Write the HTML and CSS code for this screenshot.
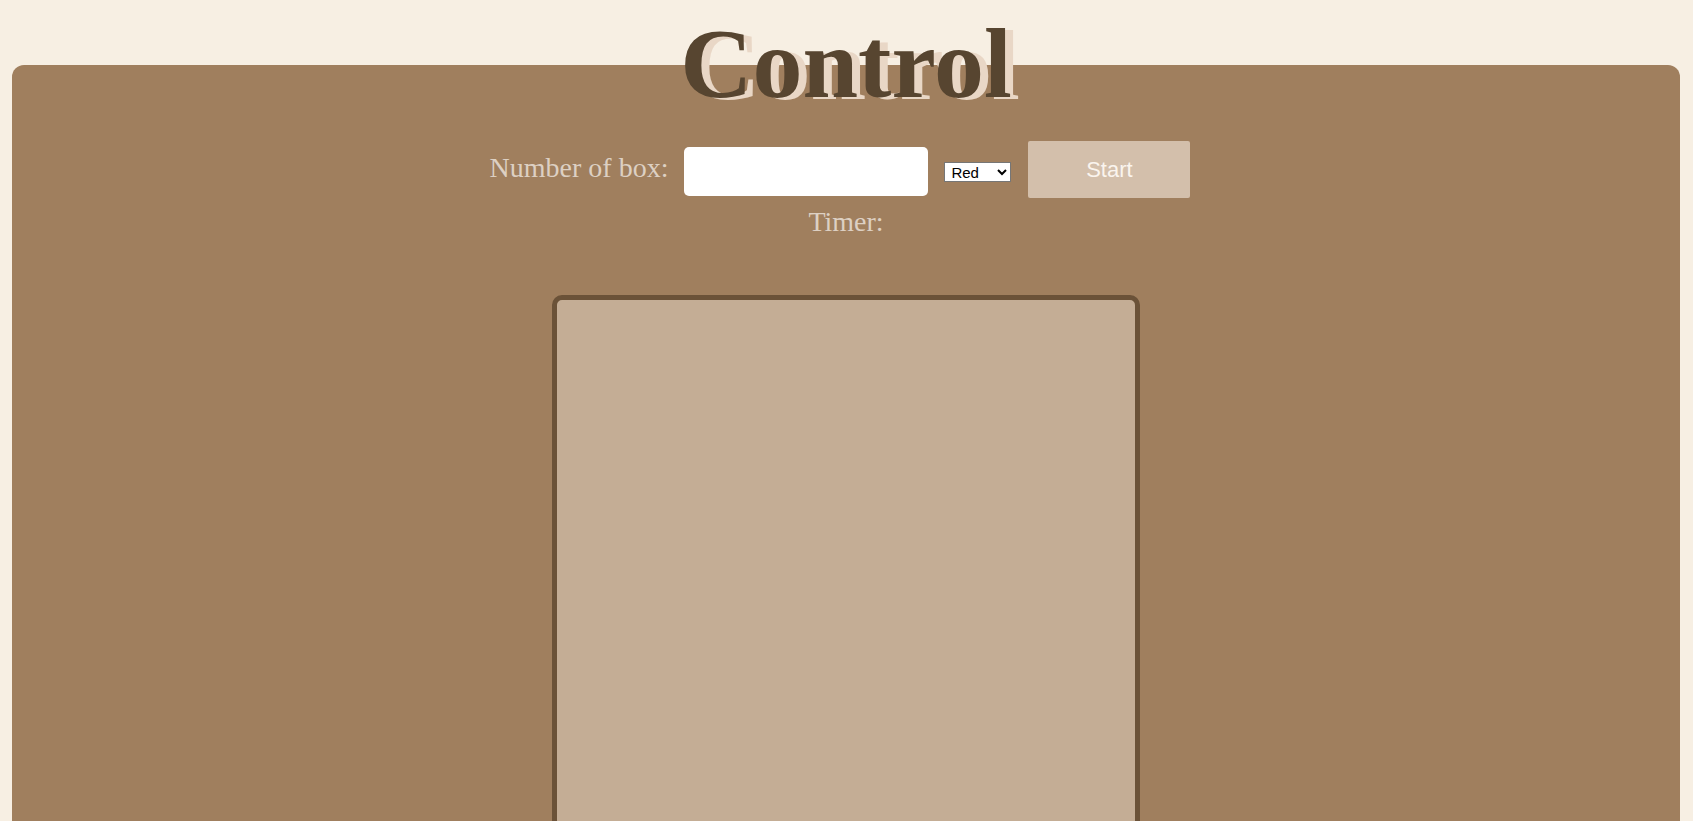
FILE: index.html
```html
<!DOCTYPE html>
<html lang="en">
<head>
<meta charset="utf-8">
<title>Control</title>
<link rel="stylesheet" href="styles.css">
</head>
<body>
<main class="panel">
  <h1 class="title">Control</h1>
  <div class="controls">
    <label class="label" for="count">Number of box:</label>
    <input class="count-input" id="count" type="text">
    <select class="color-select">
      <option>Red</option>
      <option>Green</option>
      <option>Blue</option>
      <option>Yellow</option>
    </select>
    <button class="start-btn" type="button">Start</button>
  </div>
  <div class="timer">Timer: <span class="timer-value"></span></div>
  <div class="game-box"></div>
</main>
</body>
</html>
```

FILE: styles.css
```css
html, body {
  margin: 0;
  height: 100%;
  overflow: hidden;
}

body {
  background: #f7efe3;
  padding: 0 13px 0 12px;
  box-sizing: border-box;
  font-family: "Liberation Serif", "Times New Roman", serif;
}

.panel {
  margin-top: 65px;
  background: #a07f5e;
  border-radius: 12px 12px 0 0;
  display: flex;
  flex-direction: column;
  align-items: center;
  min-height: 900px;
}

.title {
  margin: -51px 0 0 0;
  font-family: "Liberation Serif", "Times New Roman", serif;
  font-weight: bold;
  font-size: 100px;
  line-height: 100px;
  color: #574530;
  text-shadow: 8px 2px 0 #e9d7c6;
}

.controls {
  margin-top: 27px;
  display: flex;
  align-items: center;
  gap: 16px;
  padding-right: 12px;
}

.label {
  font-size: 28px;
  color: #ddd0c3;
  margin-top: -4px;
}

.count-input {
  width: 244px;
  height: 49px;
  box-sizing: border-box;
  border: none;
  border-radius: 5px;
  background: #ffffff;
  margin-top: 4px;
  padding: 0 10px;
  font-size: 18px;
}

.color-select {
  width: 67px;
  height: 20px;
  box-sizing: border-box;
  font-family: "Liberation Sans", Arial, sans-serif;
  font-size: 15px;
  border: 1px solid #767676;
  background: #ffffff;
  color: #000;
  margin-top: 5px;
  border-radius: 0;
  padding: 0 0 0 2px;
}

.start-btn {
  width: 162px;
  height: 57px;
  border: none;
  border-radius: 2px;
  background: #d3bfab;
  color: #faf4ee;
  font-family: "Liberation Sans", Arial, sans-serif;
  font-size: 22px;
  margin-left: 1px;
}

.timer {
  margin-top: 8px;
  font-size: 28px;
  color: #ddd0c3;
}

.game-box {
  margin-top: 57px;
  width: 588px;
  height: 620px;
  box-sizing: border-box;
  border: 5px solid #6b5238;
  border-radius: 10px;
  background: #c4ad95;
}
```
